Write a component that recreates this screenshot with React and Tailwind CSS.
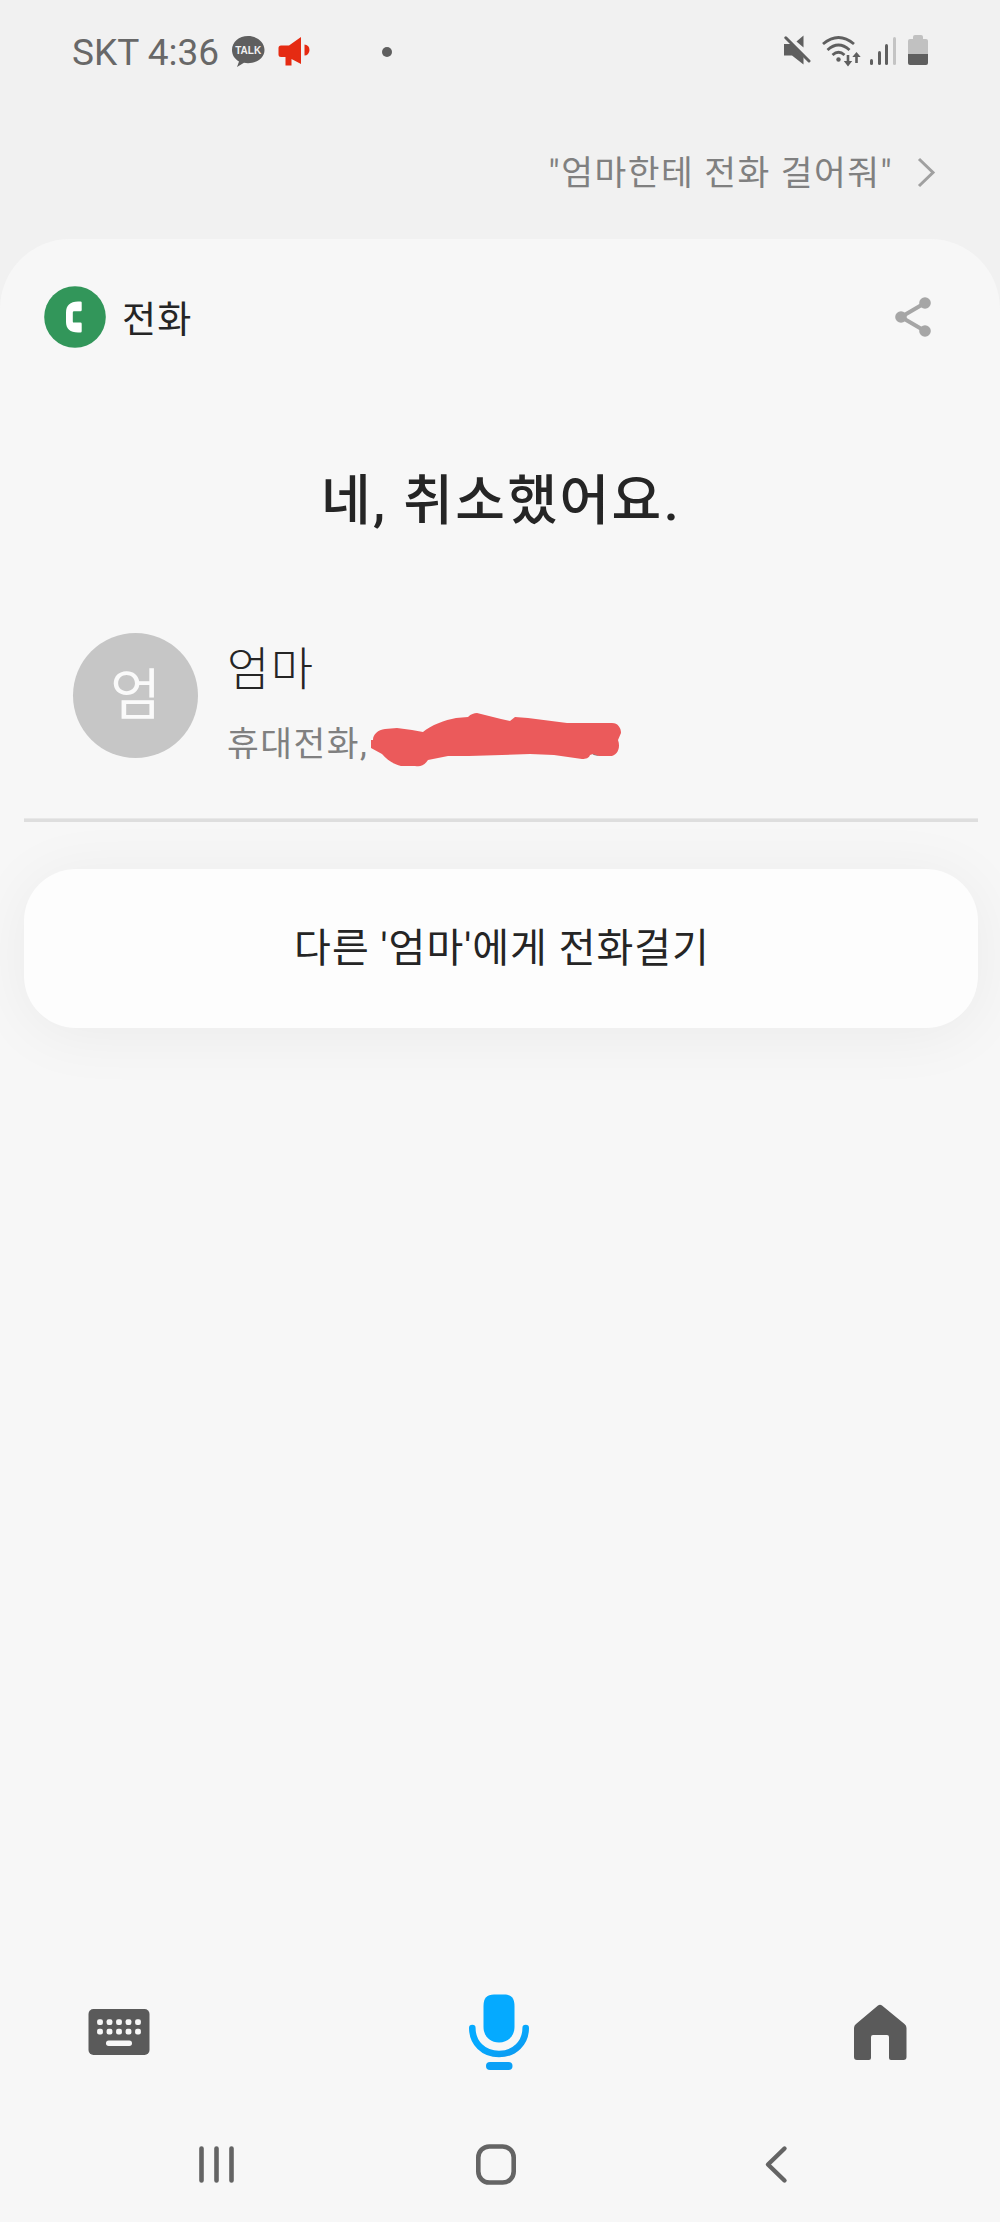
function StatusBar() {
  return (
    <header className="flex h-[104px] shrink-0 items-center justify-between pl-[72px] pr-[72px] text-[#686868]">
      <div className="flex items-center">
        <span className="mt-[2px] w-[146px] whitespace-nowrap font-['Roboto'] text-[37px] leading-[44px]">SKT 4:36</span>
        <svg className="ml-[13px] h-[34px] w-[34px]" viewBox="0 0 34 34">
          <path d="M17 1C8 1 1 7 1 15c0 5 2.700 9 7 11.500L6 32l7-4.200c1.300.3 2.600.4 4 .4 9 0 16.500-5.500 16.500-13.200S26 1 17 1Z" fill="#5f5f5f" />
          <text x="17.200" y="18.500" textAnchor="middle" fontFamily="Liberation Sans" fontWeight="700" fontSize="10" textLength="26" lengthAdjust="spacingAndGlyphs" fill="#f1f1f1">TALK</text>
        </svg>
        <svg className="ml-[13px] h-[34px] w-[34px]" viewBox="0 0 34 34" fill="#e52b12">
          <path d="M3 10.500h8L23 2v27l-9.500-5v6.500H7.500V22H3a2.500 2.500 0 0 1-2.500-2.500V13A2.500 2.500 0 0 1 3 10.500Z" />
          <path d="M26.500 9.500a5 5.500 0 0 1 0 11Z" />
        </svg>
        <span className="ml-[70px] h-[10px] w-[10px] rounded-full bg-[#5f5f5f]" />
      </div>
      <div className="flex items-center">
        <svg className="h-[34px] w-[30px]" viewBox="0 0 30 34" fill="#5f5f5f">
          <path d="M0 9h7l12.500 13v7.500L8 20.500H0Z" />
          <path d="M12.500 6.500 19.500.500V12.500Z" />
          <path d="M1.800 2.800 25 26" stroke="#5f5f5f" strokeWidth="3" strokeLinecap="round" />
        </svg>
        <svg className="ml-[8px] mt-[-1px] h-[34px] w-[40px]" viewBox="0 0 40 34" fill="none" stroke="#5f5f5f">
          <path d="M1 9Q16.500-4 32 9" strokeWidth="2.800" />
          <path d="M5.500 15Q16.500 5 27.500 15" strokeWidth="2.800" />
          <path d="M10.500 20Q16.500 14.500 22.500 20" strokeWidth="2.800" />
          <circle cx="16.500" cy="24.500" r="2.200" fill="#5f5f5f" stroke="none" />
          <path d="M26 20v8M34.500 28v-8" strokeWidth="2.600" />
          <path d="m21.800 26 4.200 5.500 4.200-5.500ZM30.300 22l4.200-5 4.200 5Z" fill="#5f5f5f" stroke="none" />
        </svg>
        <div className="mb-[2px] ml-[8px] flex h-[28px] w-[26px] items-end justify-between">
          <i className="h-[6px] w-[3px] rounded-sm bg-[#5f5f5f]" />
          <i className="h-[14px] w-[3px] rounded-sm bg-[#5f5f5f]" />
          <i className="h-[21px] w-[3px] rounded-sm bg-[#5f5f5f]" />
          <i className="h-[28px] w-[3px] rounded-sm bg-[#c4c4c4]" />
        </div>
        <div className="mb-[4px] ml-[12px] flex w-[20px] flex-col items-center">
          <i className="h-[4px] w-[10px] rounded-t-[2px] bg-[#c1c1c1]" />
          <i className="h-[15px] w-[20px] rounded-t-[2px] bg-[#c1c1c1]" />
          <i className="h-[11px] w-[20px] rounded-b-[2px] bg-[#5f5f5f]" />
        </div>
      </div>
    </header>
  );
}

function CardHeader() {
  return (
    <div className="mt-[47px] flex h-[62px] items-center pl-[44px] pr-[64px]">
      <svg className="h-[62px] w-[62px]" viewBox="0 0 62 62">
        <circle cx="31" cy="31" r="30.800" fill="#32965a" />
        <path d="M37.700 16.500V24q0 1.200-1.200 1.200H30q-1.200 0-1.200 1.200v9q0 1.200 1.200 1.200h6.500q1.200 0 1.200 1.200v7.500q0 1.200-1.200 1.200H34C26 46.500 22 42.500 22 36V26.500C22 19.500 26 15.500 34 15.500h2.500q1.200 0 1.200 1Z" fill="#fff" />
      </svg>
      <span className="ml-[16px] mt-[7px] text-[37px] leading-[56px] tracking-[1.200px] text-[#252525]">전화</span>
      <svg className="ml-auto mr-[-1px] h-[48px] w-[48px]" viewBox="0 0 24 24" fill="#a6a6a6">
        <path d="M18 5 6 12l12 7" fill="none" stroke="#a6a6a6" strokeWidth="2" />
        <circle cx="18" cy="5" r="2.900" /><circle cx="6" cy="12" r="2.900" /><circle cx="18" cy="19" r="2.900" />
      </svg>
    </div>
  );
}

function Contact() {
  return (
    <div className="mt-[91px] flex h-[128px] items-start pl-[73px]">
      <div className="flex h-[125px] w-[125px] items-center justify-center rounded-full bg-[#c6c6c6]">
        <span className="mt-[-2px] text-[55px] leading-[80px] text-[#fafafa]">엄</span>
      </div>
      <div className="ml-[29px] mt-[3px] flex flex-col">
        <span className="text-[46px] font-light leading-[66px] tracking-[1.500px] text-[#252525]">엄마</span>
        <div className="mt-[15px] flex h-[52px] items-start text-[34.500px] leading-[54px] tracking-[1.500px] text-[#808080]">
          <span className="w-[144px] whitespace-nowrap">휴대전화,</span>
          <svg className="mt-[-6px] h-[56px] w-[252px]" viewBox="370 710 252 56">
            <path d="M380 751q4 6 11 3l-3-5ZM590 752q5 5 12 1l-2-4Z" fill="#777" />
            <path d="M372 739c0-6 5-10 12-11l12-1 15 2 11 2c8-7 22-12 33-14l12-1c3-3 6-4 9-4l24 6 9 2 5-4 13 1 39 5h45c6 0 9 5 9 10l-3 7c3 8-1 16-8 16h-11l-6-2-3 1c-1 3-4 4-8 4l-28-4-24-1-61 2-21 0-20 4c-4 6-8 7-13 6l-14 0c-8-2-14-6-19-12l-11-6c-5-2-5-5-9-8Z" fill="#eb5a5b" />
          </svg>
        </div>
      </div>
    </div>
  );
}

function AssistantBar() {
  return (
    <div className="mt-auto flex h-[80px] items-center justify-between pl-[88px] pr-[93px]">
      <svg className="h-[46px] w-[62px]" viewBox="0 0 62 46">
        <rect x=".5" y="0" width="61" height="46" rx="5" fill="#5a5a5a" />
        {[12, 21.500, 31, 40.500, 50].map((x) => (
          <g key={x} fill="#f7f7f7">
            <rect x={x - 2.900} y="10.200" width="5.800" height="5.800" rx="2" />
            <rect x={x - 2.900} y="19.700" width="5.800" height="5.800" rx="2" />
          </g>
        ))}
        <rect x="18" y="31.500" width="26" height="5.500" rx="2.700" fill="#f7f7f7" />
      </svg>
      <svg className="mr-[6px] h-[76px] w-[62px]" viewBox="0 0 62 76">
        <defs>
          <linearGradient id="mic" x1="0" y1="0" x2="1" y2="1">
            <stop offset=".4" stopColor="#05aaff" />
            <stop offset="1" stopColor="#0d98ee" />
          </linearGradient>
        </defs>
        <path d="M15.500 12C15.500 4 19 .5 26 .5h10c7 0 10.500 3.500 10.500 11.500v21c0 8.500-6 15.500-15.500 15.500S15.500 41.500 15.500 33Z" fill="#05aaff" />
        <path d="M4.300 34C4.300 49 15.500 60 31 60s26.700-11 26.700-26" fill="none" stroke="url(#mic)" strokeWidth="6.600" strokeLinecap="round" />
        <rect x="18" y="68" width="26.500" height="8" rx="4" fill="#0aa0f7" />
      </svg>
      <svg className="h-[56px] w-[54px]" viewBox="0 0 54 56">
        <path d="M25 1.500q2-1.500 4 0l22.500 18.500q2 1.700 2 4V53q0 3-3 3H38q-2 0-2-2V33q0-2-2-2H20q-2 0-2 2v21q0 2-2 2H4q-3 0-3-3V24q0-2.300 2-4Z" fill="#5a5a5a" />
      </svg>
    </div>
  );
}

function NavBar() {
  return (
    <nav className="mt-[72px] flex h-[78px] items-start justify-between pl-[198px] pr-[212px]">
      <svg className="h-[42px] w-[37px]" viewBox="0 0 37 42" stroke="#646464" strokeWidth="4.600" strokeLinecap="round">
        <path d="M3.500 4.500v32M18.500 4.500v32M33.500 4.500v32" />
      </svg>
      <svg className="mr-[7px] h-[42px] w-[42px]" viewBox="0 0 42 42">
        <rect x="3.300" y="2.500" width="35.400" height="36" rx="11" fill="none" stroke="#646464" strokeWidth="4.600" />
      </svg>
      <svg className="h-[42px] w-[24px]" viewBox="0 0 24 42">
        <path d="M20.500 4.500 4 20.500l16.500 16" fill="none" stroke="#646464" strokeWidth="4.400" strokeLinecap="round" strokeLinejoin="round" />
      </svg>
    </nav>
  );
}

export default function App() {
  return (
    <div className="flex h-[2222px] w-[1000px] flex-col overflow-hidden bg-[#f1f1f1] font-['Roboto','Noto_Sans_CJK_KR',sans-serif]">
      <StatusBar />
      <div className="flex h-[135px] shrink-0 items-start justify-end pr-[64px] pt-[42px]">
        <span className="mt-[1px] text-[34.500px] leading-[52px] tracking-[1.500px] text-[#808080]">"엄마한테 전화 걸어줘"</span>
        <svg className="ml-[23px] mt-[10px] h-[32px] w-[20px]" viewBox="0 0 20 32">
          <path d="m3 3 14 13.500L3 30" fill="none" stroke="#a0a0a0" strokeWidth="3" />
        </svg>
      </div>
      <main className="flex flex-1 flex-col rounded-t-[70px] bg-[#f7f7f7]">
        <CardHeader />
        <h1 className="mt-[114px] h-[80px] pl-[2px] text-center text-[54px] font-medium leading-[80px] tracking-[2.400px] text-[#252525]">네, 취소했어요.</h1>
        <Contact />
        <div className="ml-[24px] mr-[22px] mt-[57px] h-[4px] border-t border-[#e8e8e8] bg-[#dedede]" />
        <button className="ml-[24px] mr-[22px] mt-[47px] h-[159px] shrink-0 rounded-[52px] bg-[#fdfdfd] pl-[2px] text-[40px] tracking-[1px] text-[#252525] shadow-[0_6px_64px_rgba(0,0,0,0.055)]">
          다른 '엄마'에게 전화걸기
        </button>
        <AssistantBar />
        <NavBar />
      </main>
    </div>
  );
}
